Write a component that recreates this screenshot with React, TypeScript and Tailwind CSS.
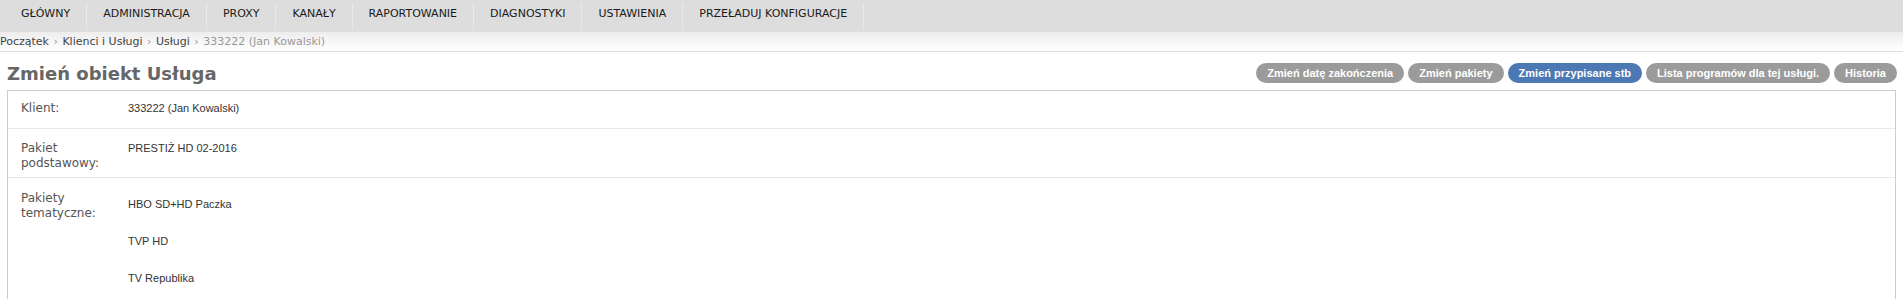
const navItems = [
  "GŁÓWNY",
  "ADMINISTRACJA",
  "PROXY",
  "KANAŁY",
  "RAPORTOWANIE",
  "DIAGNOSTYKI",
  "USTAWIENIA",
  "PRZEŁADUJ KONFIGURACJE",
];

const crumbs = ["Początek", "Klienci i Usługi", "Usługi"];

const actions = [
  { label: "Zmień datę zakończenia", active: false },
  { label: "Zmień pakiety", active: false },
  { label: "Zmień przypisane stb", active: true },
  { label: "Lista programów dla tej usługi.", active: false },
  { label: "Historia", active: false },
];

const themed = ["HBO SD+HD Paczka", "TVP HD", "TV Republika"];

const dejavu = "font-['DejaVu_Sans',Verdana,sans-serif]";
const arial = "font-['Liberation_Sans',Arial,sans-serif]";

export default function App() {
  return (
    <div className="min-h-screen bg-white">
      <nav className={`flex items-start h-[32px] bg-[#dddddd] pl-[5px] ${dejavu}`}>
        {navItems.map((item) => (
          <div
            key={item}
            className="h-[27px] mt-[3px] pt-[4px] px-4 border-r border-[#e9e9e9] text-[11px] leading-[13px] text-[#1a1a1a]"
          >
            {item}
          </div>
        ))}
      </nav>

      <div
        className={`h-[20px] bg-gradient-to-b from-[#ededed] to-white border-b border-[#dcdcdc] text-[11px] leading-[19px] ${dejavu}`}
      >
        {crumbs.map((c) => (
          <span key={c}>
            <span className="text-[#444]">{c}</span>
            <span className="px-[1px] text-[#999]"> › </span>
          </span>
        ))}
        <span className="text-[#999]">333222 (Jan Kowalski)</span>
      </div>

      <div className="flex items-start justify-between pt-[11px] pb-[6px] pl-[7px] pr-[6px]">
        <h1 className={`text-[18px] leading-[21px] font-bold text-[#666] ${dejavu}`}>
          Zmień obiekt Usługa
        </h1>
        <div className={`flex gap-[4px] ${arial}`}>
          {actions.map((a) => (
            <button
              key={a.label}
              className={`h-[20px] px-[11px] rounded-full text-[11px] font-bold text-white leading-[20px] ${
                a.active ? "bg-[#4c79b4]" : "bg-[#9b9b9b]"
              }`}
            >
              {a.label}
            </button>
          ))}
        </div>
      </div>

      <div className="mx-[7px] border border-[#cccccc]">
        <div className="flex border-b border-[#e8e8e8] pt-[10px] pb-[12px] pl-[13px]">
          <div className={`w-[107px] text-[12px] leading-[15px] text-[#555] ${dejavu}`}>Klient:</div>
          <div className={`text-[11px] leading-[15px] text-[#333] ${arial}`}>333222 (Jan Kowalski)</div>
        </div>

        <div className="flex border-b border-[#e8e8e8] pt-[12px] pb-[6px] pl-[13px]">
          <div className={`w-[107px] pr-[10px] text-[12px] leading-[15px] text-[#555] ${dejavu}`}>
            Pakiet podstawowy:
          </div>
          <div className={`text-[11px] leading-[15px] text-[#333] ${arial}`}>PRESTIŻ HD 02-2016</div>
        </div>

        <div className="flex pt-[13px] pb-[14px] pl-[13px]">
          <div className={`w-[107px] pr-[10px] text-[12px] leading-[15px] text-[#555] ${dejavu}`}>
            Pakiety tematyczne:
          </div>
          <div className={`flex flex-col gap-[22px] mt-[6px] text-[11px] leading-[15px] text-[#333] ${arial}`}>
            {themed.map((t) => (
              <div key={t}>{t}</div>
            ))}
          </div>
        </div>
      </div>
    </div>
  );
}
